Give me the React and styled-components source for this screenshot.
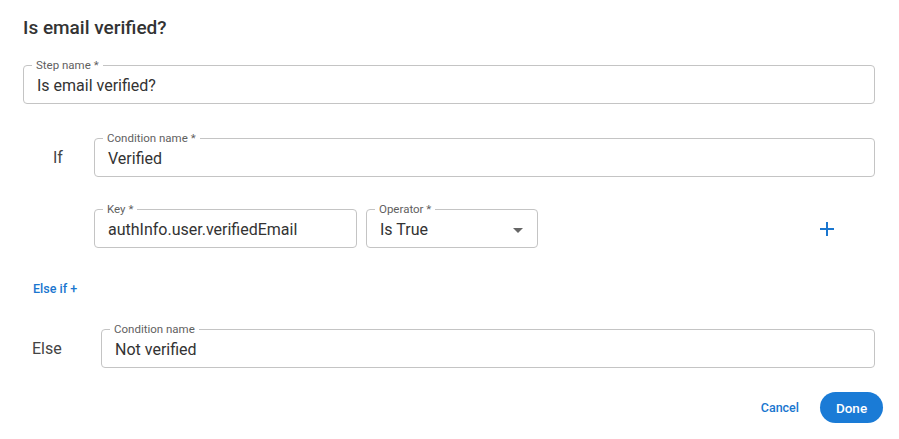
import React from "react";
import styled, { createGlobalStyle } from "styled-components";

const GlobalStyle = createGlobalStyle`
  html, body {
    margin: 0;
    padding: 0;
    background: #ffffff;
  }
  body {
    font-family: Roboto, "Noto Sans", Arial, sans-serif;
    color: #333333;
  }
  * {
    box-sizing: border-box;
  }
`;

const Dialog = styled.div`
  width: 899px;
  height: 439px;
  padding: 16px 16px 16px 23px;
  display: flex;
  flex-direction: column;
  background: #ffffff;
`;

const Title = styled.h2`
  margin: 0;
  font-size: 19px;
  line-height: 24px;
  font-weight: 500;
  color: #333333;
`;

const Body = styled.div`
  display: flex;
  flex-direction: column;
  padding-right: 8px;
  margin-top: 19px;
`;

const Field = styled.fieldset`
  margin: 0;
  padding: 0 13px;
  border: 1px solid #c4c4c4;
  border-radius: 4px;
  width: ${(props) => props.width || "auto"};
  flex: ${(props) => (props.width ? "0 0 auto" : "1 1 auto")};
  min-width: 0;
`;

const Legend = styled.legend`
  font-size: 11.5px;
  line-height: 13px;
  color: #5f5f5f;
  padding: 0 4px;
  margin-left: -5px;
`;

const Value = styled.div`
  height: 31px;
  font-size: 16px;
  line-height: 20px;
  color: #333333;
  padding-top: 4px;
  white-space: nowrap;
  display: flex;
  align-items: flex-start;
  justify-content: space-between;
`;

const Caret = styled.span`
  width: 0;
  height: 0;
  margin-top: 8px;
  margin-right: 1px;
  border-left: 5px solid transparent;
  border-right: 5px solid transparent;
  border-top: 5px solid #666666;
`;

const Row = styled.div`
  display: flex;
  align-items: center;
  margin-top: ${(props) => props.top || 0}px;
`;

const RowLabel = styled.div`
  width: ${(props) => props.width}px;
  flex: 0 0 auto;
  padding-left: ${(props) => props.indent}px;
  padding-top: 6px;
  font-size: 16px;
  color: #444444;
`;

const RuleRow = styled.div`
  display: flex;
  align-items: center;
  gap: 9px;
  margin-top: 26px;
  margin-left: 71px;
`;

const AddButton = styled.button`
  margin-left: auto;
  margin-right: 32px;
  width: 32px;
  height: 32px;
  border: none;
  background: transparent;
  padding: 0;
  display: flex;
  align-items: center;
  justify-content: center;
  cursor: pointer;
  margin-top: 6px;
`;

const LinkButton = styled.button`
  align-self: flex-start;
  border: none;
  background: transparent;
  padding: 0;
  margin: 33px 0 0 10px;
  font-family: inherit;
  font-size: 12.5px;
  font-weight: 500;
  color: #1a76cf;
  cursor: pointer;
`;

const Footer = styled.div`
  margin-top: auto;
  display: flex;
  align-items: center;
  justify-content: flex-end;
  gap: 21px;
`;

const TextButton = styled.button`
  border: none;
  background: transparent;
  padding: 0;
  font-family: inherit;
  font-size: 12.5px;
  font-weight: 500;
  color: #1a76cf;
  cursor: pointer;
`;

const PrimaryButton = styled.button`
  width: 63px;
  height: 31px;
  border: none;
  border-radius: 16px;
  background: #1a7bd6;
  color: #ffffff;
  font-family: inherit;
  font-size: 13.5px;
  font-weight: 500;
  cursor: pointer;
`;

const OutlinedField = ({ label, value, width, select }) => (
  <Field width={width}>
    <Legend>{label}</Legend>
    <Value>
      <span>{value}</span>
      {select && <Caret />}
    </Value>
  </Field>
);

const PlusIcon = () => (
  <svg width="16" height="16" viewBox="0 0 16 16">
    <path d="M8 1v14M1 8h14" stroke="#1a76cf" strokeWidth="2" fill="none" />
  </svg>
);

const App = () => {
  return (
    <>
      <GlobalStyle />
      <Dialog>
        <Title>Is email verified?</Title>
        <Body>
          <OutlinedField label="Step name *" value="Is email verified?" />

          <Row top={28}>
            <RowLabel width={71} indent={30}>
              If
            </RowLabel>
            <OutlinedField label="Condition name *" value="Verified" />
          </Row>

          <RuleRow>
            <OutlinedField
              label="Key *"
              value="authInfo.user.verifiedEmail"
              width="263px"
            />
            <OutlinedField
              label="Operator *"
              value="Is True"
              width="172px"
              select
            />
            <AddButton aria-label="Add rule">
              <PlusIcon />
            </AddButton>
          </RuleRow>

          <LinkButton>Else if +</LinkButton>

          <Row top={27}>
            <RowLabel width={78} indent={9}>
              Else
            </RowLabel>
            <OutlinedField label="Condition name" value="Not verified" />
          </Row>
        </Body>
        <Footer>
          <TextButton>Cancel</TextButton>
          <PrimaryButton>Done</PrimaryButton>
        </Footer>
      </Dialog>
    </>
  );
};

export default App;
